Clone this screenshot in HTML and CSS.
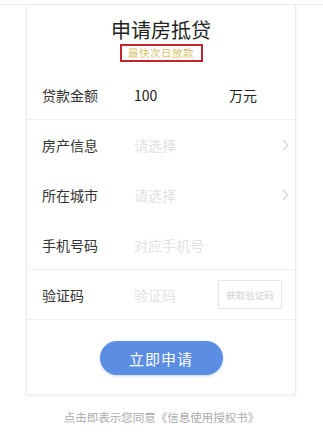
FILE: index.html
```html
<!DOCTYPE html>
<html lang="zh">
<head>
<meta charset="utf-8">
<link rel="stylesheet" href="styles.css">
</head>
<body>
<div class="topbar"></div>
<div class="card">
  <div class="head">
    <div class="title">申请房抵贷</div>
    <div class="badge">最快次日放款</div>
  </div>
  <div class="row sep">
    <span class="label">贷款金额</span>
    <span class="value">100</span>
    <span class="unit">万元</span>
  </div>
  <div class="row">
    <span class="label">房产信息</span>
    <span class="ph">请选择</span>
    <svg class="chev" width="7" height="12" viewBox="0 0 7 12"><polyline points="1,1 6,6 1,11" fill="none" stroke="#d4d4d4" stroke-width="1.2"/></svg>
  </div>
  <div class="row">
    <span class="label">所在城市</span>
    <span class="ph">请选择</span>
    <svg class="chev" width="7" height="12" viewBox="0 0 7 12"><polyline points="1,1 6,6 1,11" fill="none" stroke="#d4d4d4" stroke-width="1.2"/></svg>
  </div>
  <div class="row sep">
    <span class="label">手机号码</span>
    <span class="ph">对应手机号</span>
  </div>
  <div class="row sep">
    <span class="label">验证码</span>
    <span class="ph">验证码</span>
    <span class="code">获取验证码</span>
  </div>
  <div class="action">
    <div class="btn">立即申请</div>
  </div>
</div>
<div class="foot">点击即表示您同意《信息使用授权书》</div>
</body>
</html>
```
FILE: styles.css
```css
* { box-sizing: border-box; }
html, body { margin: 0; padding: 0; background: #fff; }
body {
  font-family: "Noto Sans CJK SC", "Noto Sans", sans-serif;
  color: #333;
  width: 323px;
}
.topbar {
  height: 5px;
  border-bottom: 1px solid #ececec;
}
.card {
  margin: 0 27px 0 26px;
  height: 390px;
  border: 1px solid #ececec;
  border-top: none;
  box-shadow: 0 1px 3px rgba(0,0,0,0.06);
  background: #fff;
  display: flex;
  flex-direction: column;
}
.head {
  height: 65px;
  display: flex;
  flex-direction: column;
  align-items: center;
  padding-top: 11px;
}
.title {
  font-size: 20px;
  line-height: 28px;
  color: #222;
}
.badge {
  width: 83px;
  height: 18px;
  border: 2px solid #c4242c;
  font-size: 10.5px;
  line-height: 14px;
  color: #d8c26a;
  text-align: center;
  letter-spacing: 0.5px;
}
.row {
  height: 50px;
  display: flex;
  align-items: center;
  padding-left: 15px;
  padding-right: 6px;
  font-size: 14px;
}
.row.sep { border-bottom: 1px solid #f0f0f0; }
.label {
  width: 92px;
  color: #333;
}
.value {
  width: 95px;
  color: #222;
}
.unit { color: #222; }
.ph {
  flex: 1;
  color: #e2e2e2;
}
.chev { display: block; }
.code {
  margin-right: 7px;
  width: 64px;
  height: 29px;
  border: 1px solid #e6e6e6;
  font-size: 9.5px;
  color: #d2d2d2;
  display: flex;
  align-items: center;
  justify-content: center;
}
.action {
  flex: 1;
  display: flex;
  justify-content: center;
  padding-top: 21px;
}
.btn {
  width: 123px;
  height: 34px;
  border-radius: 17px;
  background: #5b8ee2;
  color: #fff;
  font-size: 15px;
  display: flex;
  align-items: center;
  justify-content: center;
  box-shadow: 0 1px 3px rgba(60,110,200,0.3);
  letter-spacing: 1px;
}
.foot {
  margin-top: 14px;
  text-align: center;
  font-size: 11.5px;
  color: #ababab;
}
```
